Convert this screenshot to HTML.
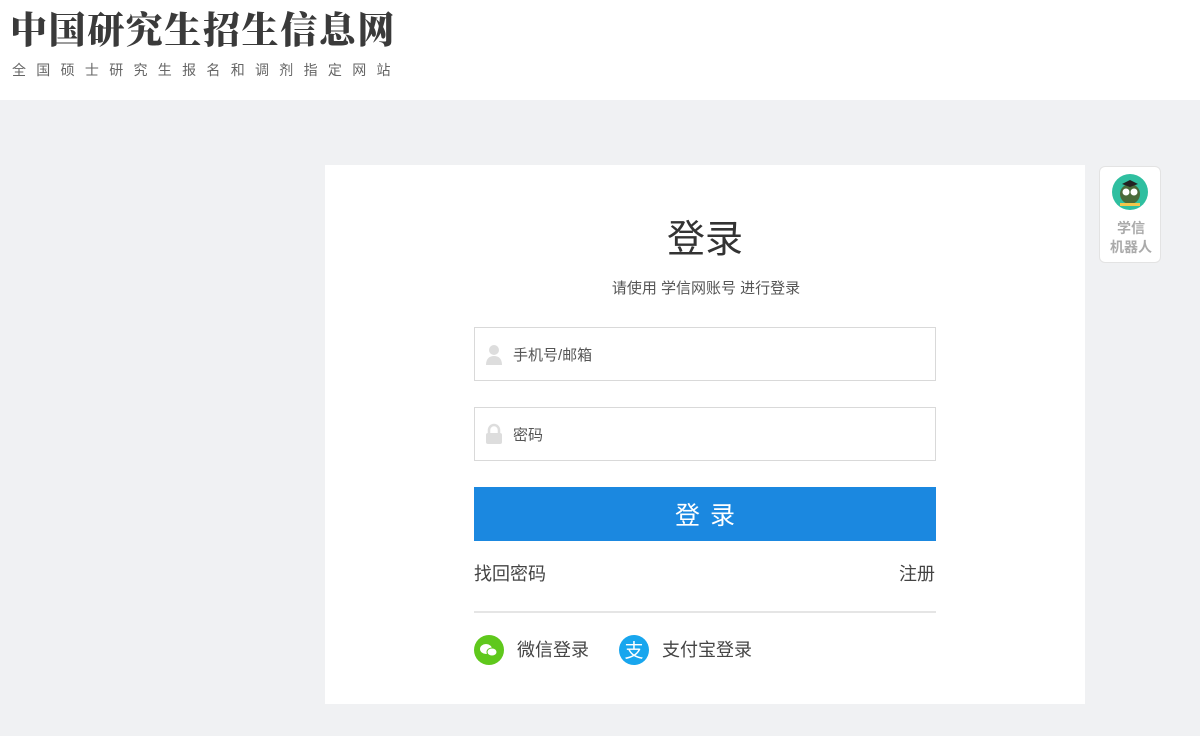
<!DOCTYPE html>
<html><head><meta charset="utf-8"><style>
*{margin:0;padding:0;box-sizing:border-box}
body{width:1200px;height:736px;background:#f0f1f3;font-family:"Liberation Sans","Noto Sans CJK SC",sans-serif;position:relative;overflow:hidden}
.hd{position:absolute;left:0;top:0;width:1200px;height:100px;background:#fff}
.t1{position:absolute;left:10px;top:8px;font-family:"Liberation Serif","Noto Serif CJK SC",serif;font-weight:900;font-size:37px;color:#3a3a3a;letter-spacing:1.6px;line-height:48px;white-space:nowrap}
.t2{position:absolute;left:12px;top:60px;font-size:14px;color:#666;letter-spacing:10.3px;white-space:nowrap}
.card{position:absolute;left:325px;top:165px;width:760px;height:539px;background:#fff}
.abs{position:absolute}
.inp{position:absolute;left:474px;width:462px;height:54px;border:1px solid #d9d9d9;background:#fff}
.inp span{position:absolute;left:38px;top:16px;font-size:15px;color:#555}
.btn{position:absolute;left:474px;top:487px;width:462px;height:54px;background:#1b88e0;color:#fff;font-size:25px;text-align:center;line-height:58px;letter-spacing:10px;padding-left:10px}
.bot{position:absolute;left:1099px;top:166px;width:62px;height:97px;background:#fff;border:1px solid #e3e3e3;border-radius:6px}
</style></head><body>
<div class="hd">
<div class="t1">中国研究生招生信息网</div>
<div class="t2">全国硕士研究生报名和调剂指定网站</div>
</div>
<div class="card"></div>
<div class="abs" style="left:0;top:221px;width:1410px;text-align:center;font-size:38px;color:#333;line-height:1">登录</div>
<div class="abs" style="left:0;top:277px;width:1412px;text-align:center;font-size:15px;color:#555">请使用 学信网账号 进行登录</div>
<div class="inp" style="top:327px"><svg class="abs" style="left:10px;top:16px" width="18" height="22" viewBox="0 0 18 22"><circle cx="9" cy="6" r="5" fill="#ddd"/><path d="M1 21c0-6 3-9 8-9s8 3 8 9z" fill="#ddd"/></svg><span>手机号/邮箱</span></div>
<div class="inp" style="top:407px"><svg class="abs" style="left:10px;top:15px" width="18" height="22" viewBox="0 0 18 22"><path d="M4 10V7a5 5 0 0 1 10 0v3" stroke="#ddd" stroke-width="2.5" fill="none"/><rect x="1" y="10" width="16" height="11" rx="2" fill="#ddd"/></svg><span>密码</span></div>
<div class="btn">登录</div>
<div class="abs" style="left:474px;top:560px;font-size:18px;color:#444">找回密码</div>
<div class="abs" style="left:899px;top:560px;font-size:18px;color:#444">注册</div>
<div class="abs" style="left:474px;top:611px;width:462px;height:2px;background:#e5e5e5"></div>
<svg class="abs" style="left:474px;top:635px" width="30" height="30"><circle cx="15" cy="15" r="15" fill="#5fc81c"/><ellipse cx="12" cy="14" rx="6" ry="5" fill="#fff"/><ellipse cx="18" cy="17" rx="5" ry="4" fill="#fff" stroke="#5fc81c"/></svg>
<div class="abs" style="left:517px;top:636px;font-size:18px;color:#444">微信登录</div>
<svg class="abs" style="left:619px;top:635px" width="30" height="30"><circle cx="15" cy="15" r="15" fill="#18a6ee"/><text x="15" y="22" text-anchor="middle" font-size="19" fill="#fff" font-family="Noto Sans CJK SC">支</text></svg>
<div class="abs" style="left:662px;top:636px;font-size:18px;color:#444">支付宝登录</div>
<div class="bot">
<svg class="abs" style="left:11px;top:6px" width="38" height="38"><circle cx="19" cy="19" r="18" fill="#2fbfa0"/><circle cx="19" cy="21" r="10" fill="#4a6b3a"/><circle cx="15" cy="19" r="3.5" fill="#fff"/><circle cx="23" cy="19" r="3.5" fill="#fff"/><path d="M11 11l8-4 8 4-8 3z" fill="#222"/><rect x="9" y="30" width="20" height="3" fill="#f3c64b"/></svg>
<div class="abs" style="left:0;top:52px;width:62px;text-align:center;font-size:14px;font-weight:bold;color:#aaa;line-height:19px">学信<br>机器人</div>
</div>
</body></html>
